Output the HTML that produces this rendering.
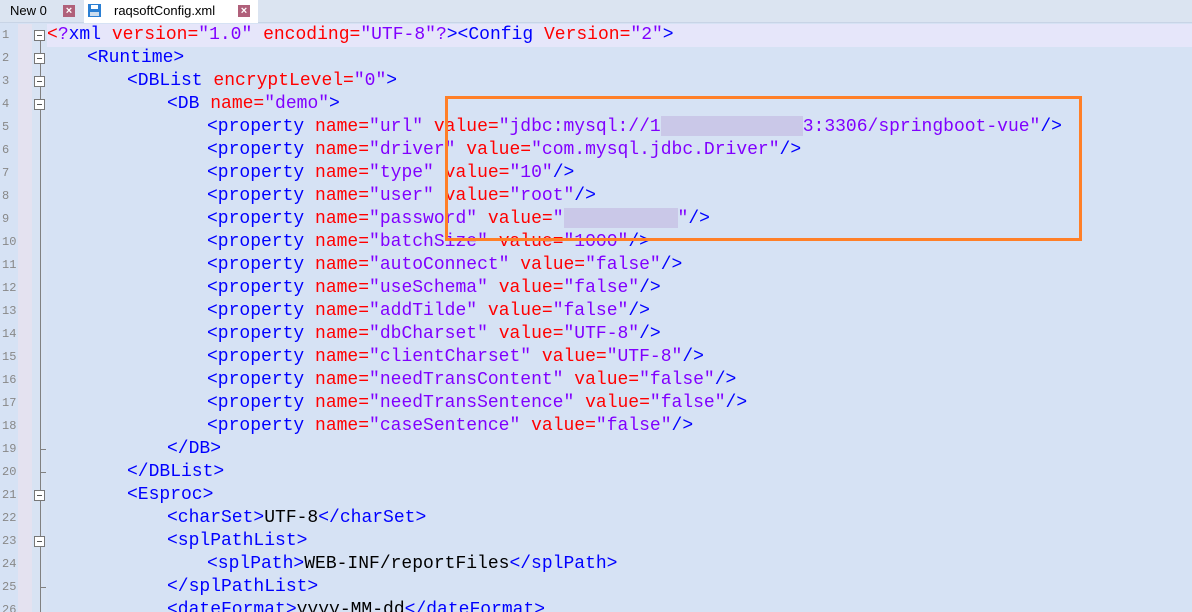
<!DOCTYPE html>
<html><head><meta charset="utf-8"><style>
*{margin:0;padding:0;box-sizing:border-box}
html,body{width:1192px;height:612px;overflow:hidden}
body{background:#d6e2f4;position:relative;font-family:"Liberation Mono",monospace}
#tabs{position:absolute;left:0;top:0;width:1192px;height:23px;background:#dbe4f1;border-bottom:1px solid #c8d4e6;font-family:"Liberation Sans",sans-serif;font-size:13px}
.tab{position:absolute;top:0;height:23px;line-height:22px}
.x{position:absolute;top:5px;width:12px;height:12px;background:#b0607a;color:#fff;font-size:11px;line-height:12px;text-align:center;font-weight:bold}
#ln{position:absolute;left:0;top:24px;width:18px;height:600px;background:#d6e2f4}
#mg{position:absolute;left:18px;top:24px;width:14px;height:600px;background:#e4e2f0}
#fold{position:absolute;left:32px;top:24px;width:15px;height:600px;background:#d8e3f3}
.l{position:absolute;left:0;height:23px;line-height:23px;font-size:18px;white-space:pre}
.n{position:absolute;left:0;width:18px;height:23px;line-height:23px;font-family:"Liberation Mono",monospace;font-size:12px;color:#888;padding-left:2px;overflow:hidden}
.b{position:absolute;left:34px;width:11px;height:11px;border:1px solid #777;background:#fff}
.b::after{content:"";position:absolute;left:2px;top:4px;width:5px;height:1px;background:#555}
.t{color:#0000ff}.a{color:#ff0000}.v{color:#8000ff}.k{color:#000}
.blur{display:inline-block;background:#cac8e8;height:20px;vertical-align:middle}
</style></head><body>
<div id="tabs">
<div class="tab" style="left:0;width:84px;padding-left:10px;color:#000">New 0<span class="x" style="left:63px">×</span></div>
<div class="tab" style="left:84px;width:174px;background:#fff;padding-left:30px">
<svg style="position:absolute;left:4px;top:4px" width="13" height="13" viewBox="0 0 13 13"><rect x="0" y="0" width="13" height="13" fill="#2a7fd4"/><rect x="3" y="1" width="7" height="4" fill="#fff"/><rect x="2" y="8" width="9" height="4" fill="#cde"/></svg>
raqsoftConfig.xml<span class="x" style="left:154px">×</span></div>
</div>
<div id="ln"></div><div id="mg"></div><div id="fold"></div>
<div style="position:absolute;left:40px;top:40px;width:1px;height:572px;background:#808080"></div>
<div style="position:absolute;left:47px;top:24px;width:1145px;height:23px;background:#e6e6fa"></div>
<div id="lines"></div>
<div style="position:absolute;left:445px;top:96px;width:637px;height:145px;border:3px solid #ff7f27"></div>
<script>
var L=[
[0,'<span class="a">&lt;</span><span class="v">?</span><span class="t">xml </span><span class="a">version=</span><span class="v">"1.0"</span><span class="a"> encoding=</span><span class="v">"UTF-8"</span><span class="v">?</span><span class="t">&gt;&lt;Config </span><span class="a">Version=</span><span class="v">"2"</span><span class="t">&gt;</span>',1],
[1,'<span class="t">&lt;Runtime&gt;</span>',1],
[2,'<span class="t">&lt;DBList </span><span class="a">encryptLevel=</span><span class="v">"0"</span><span class="t">&gt;</span>',1],
[3,'<span class="t">&lt;DB </span><span class="a">name=</span><span class="v">"demo"</span><span class="t">&gt;</span>',1],
[4,'P"url" <span class="a">value=</span><span class="v">"jdbc:mysql://1<span class="blur" style="width:142px"></span>3:3306/springboot-vue"</span><span class="t">/&gt;</span>'],
[4,'P"driver" <span class="a">value=</span><span class="v">"com.mysql.jdbc.Driver"</span><span class="t">/&gt;</span>'],
[4,'P"type" <span class="a">value=</span><span class="v">"10"</span><span class="t">/&gt;</span>'],
[4,'P"user" <span class="a">value=</span><span class="v">"root"</span><span class="t">/&gt;</span>'],
[4,'P"password" <span class="a">value=</span><span class="v">"<span class="blur" style="width:114px"></span>"</span><span class="t">/&gt;</span>'],
[4,'P"batchSize" <span class="a">value=</span><span class="v">"1000"</span><span class="t">/&gt;</span>'],
[4,'P"autoConnect" <span class="a">value=</span><span class="v">"false"</span><span class="t">/&gt;</span>'],
[4,'P"useSchema" <span class="a">value=</span><span class="v">"false"</span><span class="t">/&gt;</span>'],
[4,'P"addTilde" <span class="a">value=</span><span class="v">"false"</span><span class="t">/&gt;</span>'],
[4,'P"dbCharset" <span class="a">value=</span><span class="v">"UTF-8"</span><span class="t">/&gt;</span>'],
[4,'P"clientCharset" <span class="a">value=</span><span class="v">"UTF-8"</span><span class="t">/&gt;</span>'],
[4,'P"needTransContent" <span class="a">value=</span><span class="v">"false"</span><span class="t">/&gt;</span>'],
[4,'P"needTransSentence" <span class="a">value=</span><span class="v">"false"</span><span class="t">/&gt;</span>'],
[4,'P"caseSentence" <span class="a">value=</span><span class="v">"false"</span><span class="t">/&gt;</span>'],
[3,'<span class="t">&lt;/DB&gt;</span>',2],
[2,'<span class="t">&lt;/DBList&gt;</span>',2],
[2,'<span class="t">&lt;Esproc&gt;</span>',1],
[3,'<span class="t">&lt;charSet&gt;</span><span class="k">UTF-8</span><span class="t">&lt;/charSet&gt;</span>'],
[3,'<span class="t">&lt;splPathList&gt;</span>',1],
[4,'<span class="t">&lt;splPath&gt;</span><span class="k">WEB-INF/reportFiles</span><span class="t">&lt;/splPath&gt;</span>'],
[3,'<span class="t">&lt;/splPathList&gt;</span>',2],
[3,'<span class="t">&lt;dateFormat&gt;</span><span class="k">yyyy-MM-dd</span><span class="t">&lt;/dateFormat&gt;</span>']
];
var h='';
L.forEach(function(r,i){
 var y=24+i*23;
 var s=r[1].replace(/^P/,'<span class="t">&lt;property </span><span class="a">name=</span><span class="v">').replace('" <span class="a">value','"</span> <span class="a">value');
 h+='<div class="n" style="top:'+y+'px">'+(i+1)+'</div>';
 if(r[2]==1)h+='<div class="b" style="top:'+(y+6)+'px"></div>';
 if(r[2]==2)h+='<div style="position:absolute;left:40px;top:'+(y+11)+'px;width:6px;height:1px;background:#808080"></div>';
 h+='<div class="l" style="top:'+y+'px;left:'+(47+r[0]*40)+'px">'+s+'</div>';
});
document.getElementById('lines').innerHTML=h;
</script>
</body></html>
